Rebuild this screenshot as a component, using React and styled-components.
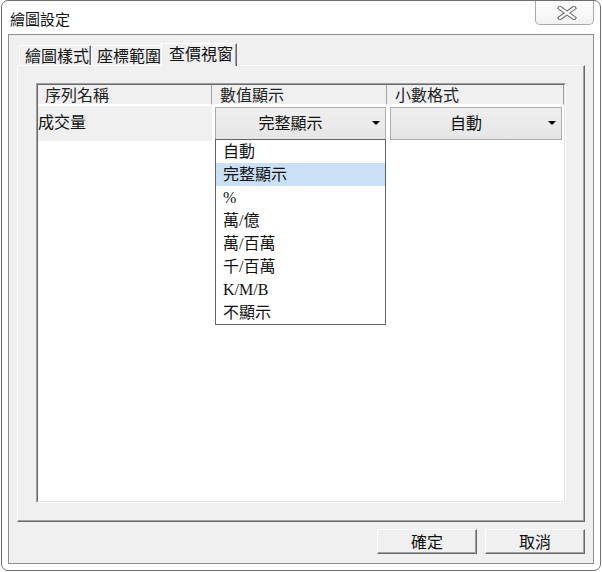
import React from 'react';
import styled, { createGlobalStyle } from 'styled-components';

const GlobalStyle = createGlobalStyle`
  html, body { margin: 0; padding: 0; background: #ffffff; }
  body { font-family: "Noto Sans CJK TC", "Liberation Sans", sans-serif; color: #000; }
  * { box-sizing: border-box; }
`;

const Window = styled.div`
  margin-left: 1px;
  width: 600px;
  height: 571px;
  border: 1px solid #707070;
  border-radius: 7px;
  background: #ffffff;
  display: flex;
  flex-direction: column;
  padding: 0 6px 6px 6px;
  overflow: hidden;
`;

const TitleBar = styled.div`
  height: 33px;
  flex: none;
  display: flex;
  justify-content: space-between;
  align-items: flex-start;
`;

const Title = styled.div`
  font-size: 15px;
  line-height: 15px;
  padding: 10px 0 0 2px;
  color: #111;
`;

const CloseButton = styled.div`
  width: 59px;
  height: 24px;
  border: 1px solid #a9a9a9;
  border-top: none;
  border-radius: 0 0 5px 5px;
  background: linear-gradient(#ffffff, #f2f2f2);
  display: flex;
  align-items: center;
  justify-content: center;
  padding-left: 4px;
`;

const Client = styled.div`
  flex: 1;
  border: 1px solid #8e8e8e;
  background: #f0f0f0;
  display: flex;
  flex-direction: column;
  padding: 8px 8px 9px 8px;
`;

const TabStrip = styled.div`
  height: 22px;
  flex: none;
  display: flex;
  align-items: flex-end;
  padding-left: 2px;
`;

const Tab = styled.div`
  position: relative;
  height: ${(p) => (p.$active ? '23px' : '20px')};
  width: ${(p) => (p.$active ? '76px' : '72px')};
  margin: ${(p) => (p.$active ? '0 -2px -1px -2px' : '0')};
  z-index: ${(p) => (p.$active ? 1 : 0)};
  padding-left: ${(p) => (p.$active ? '7px' : '5px')};
  border-top: 1px solid #ffffff;
  border-left: 1px solid #ffffff;
  border-right: 1px solid #696969;
  box-shadow: inset -1px 0 0 #a0a0a0;
  background: #f0f0f0;
  font-size: 16px;
  line-height: 18px;
  white-space: nowrap;
  color: #111;
`;

const Panel = styled.div`
  flex: 1;
  display: flex;
  flex-direction: column;
  border-top: 1px solid #ffffff;
  border-left: 1px solid #ffffff;
  border-right: 1px solid #696969;
  border-bottom: 1px solid #696969;
  box-shadow: inset -1px -1px 0 #a0a0a0;
  padding: 17px 18px 18px 18px;
`;

const GridFrame = styled.div`
  flex: 1;
  display: flex;
  border-top: 1px solid #a0a0a0;
  border-left: 1px solid #a0a0a0;
  border-right: 1px solid #ffffff;
  border-bottom: 1px solid #ffffff;
`;

const GridBody = styled.div`
  flex: 1;
  background: #ffffff;
  border-top: 1px solid #696969;
  border-left: 1px solid #696969;
  border-right: 1px solid #e3e3e3;
  border-bottom: 1px solid #e3e3e3;
`;

const Row = styled.div`
  display: grid;
  grid-template-columns: 174px 175px 177px;
  height: ${(p) => p.$h}px;
`;

const HeadCell = styled.div`
  background: #f0f0f0;
  border-right: 1px solid #a0a0a0;
  border-bottom: 1px solid #ffffff;
  padding-left: ${(p) => p.$pad}px;
  font-size: 16px;
  line-height: 19px;
  color: #222;
`;

const FixedCell = styled.div`
  background: #f0f0f0;
  margin-top: 1px;
  font-size: 16px;
  line-height: 30px;
  color: #111;
`;

const EditCell = styled.div`
  position: relative;
  padding: 2px 0 0 3px;
`;

const Combo = styled.div`
  position: relative;
  width: ${(p) => p.$w}px;
  height: 33px;
  border: 1px solid #acacac;
  background: linear-gradient(#efefef, #e6e6e6);
  display: flex;
  align-items: center;
  padding: 0 20px 3px 0;
`;

const ComboText = styled.div`
  flex: 1;
  text-align: center;
  font-size: 16px;
  line-height: 20px;
  color: #111;
`;

const Arrow = styled.div`
  position: absolute;
  right: 5px;
  top: 13px;
  width: 0;
  height: 0;
  border-left: 4px solid transparent;
  border-right: 4px solid transparent;
  border-top: 4px solid #000;
`;

const DropList = styled.div`
  position: absolute;
  left: -1px;
  top: 31px;
  width: 171px;
  height: 186px;
  border: 1px solid #646464;
  background: #ffffff;
  z-index: 5;
`;

const DropItem = styled.div`
  height: 23px;
  padding-left: 7px;
  font-family: "Liberation Serif", "Noto Sans CJK TC", serif;
  font-size: 16px;
  line-height: 24px;
  color: #111;
  background: ${(p) => (p.$sel ? '#cae0f6' : 'transparent')};
`;

const Footer = styled.div`
  flex: none;
  margin-top: 7px;
  display: flex;
  justify-content: flex-end;
  gap: 8px;
`;

const Button = styled.div`
  width: 100px;
  height: 25px;
  border-top: 1px solid #ffffff;
  border-left: 1px solid #ffffff;
  border-right: 1px solid #696969;
  border-bottom: 1px solid #696969;
  box-shadow: inset -1px -1px 0 #a0a0a0;
  background: #f0f0f0;
  text-align: center;
  font-size: 16px;
  line-height: 22px;
  color: #111;
`;

const options = ['自動', '完整顯示', '%', '萬/億', '萬/百萬', '千/百萬', 'K/M/B', '不顯示'];

function CloseGlyph() {
  return (
    <svg width="20" height="14" viewBox="0 0 20 14">
      <path d="M3 2 L17 12 M17 2 L3 12" stroke="#6e6e6e" strokeWidth="4.4" strokeLinecap="square" fill="none" />
      <path d="M3 2 L17 12 M17 2 L3 12" stroke="#ffffff" strokeWidth="2.2" strokeLinecap="square" fill="none" />
    </svg>
  );
}

export default function App() {
  return (
    <>
      <GlobalStyle />
      <Window>
        <TitleBar>
          <Title>繪圖設定</Title>
          <CloseButton>
            <CloseGlyph />
          </CloseButton>
        </TitleBar>
        <Client>
          <TabStrip>
            <Tab>繪圖樣式</Tab>
            <Tab>座標範圍</Tab>
            <Tab $active>查價視窗</Tab>
          </TabStrip>
          <Panel>
            <GridFrame>
              <GridBody>
                <Row $h={20}>
                  <HeadCell $pad={7}>序列名稱</HeadCell>
                  <HeadCell $pad={8}>數值顯示</HeadCell>
                  <HeadCell $pad={8}>小數格式</HeadCell>
                </Row>
                <Row $h={36}>
                  <FixedCell>成交量</FixedCell>
                  <EditCell>
                    <Combo $w={171}>
                      <ComboText>完整顯示</ComboText>
                      <Arrow />
                      <DropList>
                        {options.map((o, i) => (
                          <DropItem key={o} $sel={i === 1}>{o}</DropItem>
                        ))}
                      </DropList>
                    </Combo>
                  </EditCell>
                  <EditCell>
                    <Combo $w={172}>
                      <ComboText>自動</ComboText>
                      <Arrow />
                    </Combo>
                  </EditCell>
                </Row>
              </GridBody>
            </GridFrame>
          </Panel>
          <Footer>
            <Button>確定</Button>
            <Button>取消</Button>
          </Footer>
        </Client>
      </Window>
    </>
  );
}
